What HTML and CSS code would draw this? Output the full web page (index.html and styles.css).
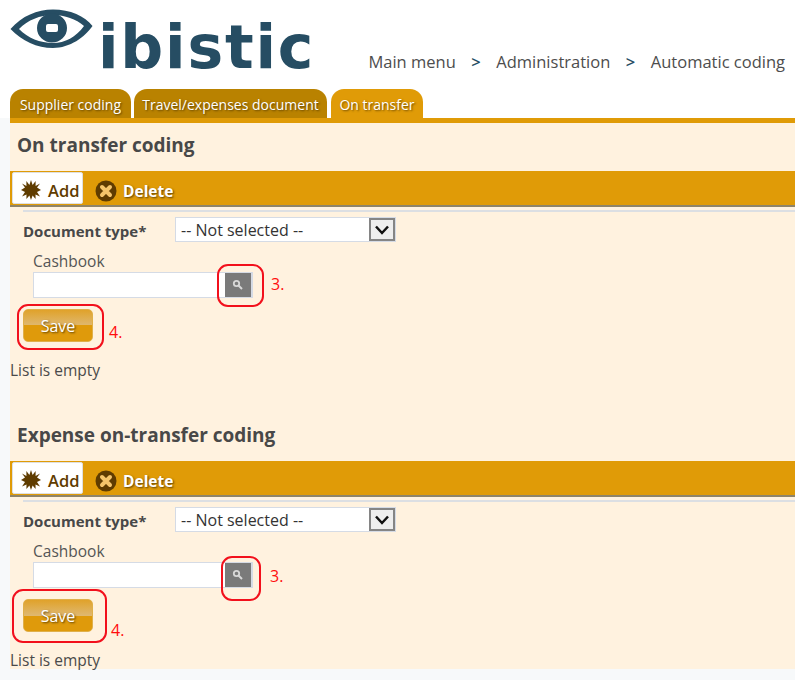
FILE: index.html
```
<!DOCTYPE html>
<html lang="en">
<head>
<meta charset="utf-8">
<title>Automatic coding</title>
<link rel="stylesheet" href="styles.css">
</head>
<body>
<header class="header">
  <div class="logo">
    <svg class="eye" width="87" height="40" viewBox="0 0 87 40">
      <path fill-rule="evenodd" fill="#264d63" d="M0.5 20C12 7 27 0.5 43 0.5C60 0.5 75 7 82.5 17C75 28 60 39 43 39C27 39 12 32 0.5 20ZM9 20C18 29 30 34 43 34C55 34 66 28 74 17C66 10 55 6 43 6C30 6 18 11 9 20Z"/>
      <path fill-rule="evenodd" fill="#264d63" d="M42 4.500A15 14.500 0 1 1 42 33.500A15 14.500 0 1 1 42 4.500ZM38 15H46A2 2 0 0 1 48 17V21A2 2 0 0 1 46 23H38A2 2 0 0 1 36 21V17A2 2 0 0 1 38 15Z"/>
    </svg>
    <span class="logo-text">ibistic</span>
  </div>
  <nav class="crumbs">
    <span>Main menu</span><span class="sep">&gt;</span><span>Administration</span><span class="sep">&gt;</span><span>Automatic coding</span>
  </nav>
</header>
<div class="tabs">
  <span class="tab tab-one">Supplier coding</span>
  <span class="tab tab-two">Travel/expenses document</span>
  <span class="tab tab-active">On transfer</span>
</div>
<main class="panel">
  <section class="block">
    <h2 class="title">On transfer coding</h2>
    <div class="toolbar">
      <span class="tool-add">
        <svg class="burst" width="20" height="20" viewBox="0 0 20 20"><path fill="#5f3c00" d="M10 0L11.6 5 14.6 1 14.6 6 19 3.5 16 7.5 20 10 16 12 19 16.5 14.5 14.5 14.6 19 11.6 15.500 10 20 8.400 15.500 5.400 19 5.500 14.500 1 16.500 4 12 0 10 4 7.500 1 3.500 5.400 6 5.400 1 8.400 5Z"/></svg>
        Add
      </span>
      <span class="tool-delete">
        <svg width="22" height="22" viewBox="0 0 22 22"><circle cx="11" cy="11" r="10.500" fill="#5f3c00"/><path d="M7 7L15 15M15 7L7 15" stroke="#f5c56a" stroke-width="4" stroke-linecap="round"/></svg>
        Delete
      </span>
    </div>
    <div class="form">
      <div class="doc-row">
        <label class="doc-label">Document type*</label>
        <div class="select"><span>-- Not selected --</span><span class="select-btn"><svg width="16" height="10" viewBox="0 0 16 10"><path d="M2 1.500L8 8L14 1.500" fill="none" stroke="#111" stroke-width="2.500"/></svg></span></div>
      </div>
      <div class="cash">
        <div class="cash-label">Cashbook</div>
        <div class="cash-row">
          <span class="input"></span>
          <span class="search"><svg width="12" height="12" viewBox="0 0 12 12"><circle cx="4.500" cy="4.500" r="2.700" fill="none" stroke="#d8d8d8" stroke-width="1.800"/><path d="M6.500 6.500L10 10" stroke="#d8d8d8" stroke-width="2"/></svg></span>
          <span class="note note-3a">3.</span>
          <span class="ring ring-3a"></span>
        </div>
      </div>
      <div class="save-row">
        <span class="save">Save</span>
        <span class="note note-4a">4.</span>
        <span class="ring ring-4a"></span>
      </div>
    </div>
    <p class="empty">List is empty</p>
  </section>
  <section class="block block-two">
    <h2 class="title">Expense on-transfer coding</h2>
    <div class="toolbar">
      <span class="tool-add">
        <svg class="burst" width="20" height="20" viewBox="0 0 20 20"><path fill="#5f3c00" d="M10 0L11.6 5 14.6 1 14.6 6 19 3.5 16 7.5 20 10 16 12 19 16.5 14.5 14.5 14.6 19 11.6 15.500 10 20 8.400 15.500 5.400 19 5.500 14.500 1 16.500 4 12 0 10 4 7.500 1 3.500 5.400 6 5.400 1 8.400 5Z"/></svg>
        Add
      </span>
      <span class="tool-delete">
        <svg width="22" height="22" viewBox="0 0 22 22"><circle cx="11" cy="11" r="10.500" fill="#5f3c00"/><path d="M7 7L15 15M15 7L7 15" stroke="#f5c56a" stroke-width="4" stroke-linecap="round"/></svg>
        Delete
      </span>
    </div>
    <div class="form">
      <div class="doc-row">
        <label class="doc-label">Document type*</label>
        <div class="select"><span>-- Not selected --</span><span class="select-btn"><svg width="16" height="10" viewBox="0 0 16 10"><path d="M2 1.500L8 8L14 1.500" fill="none" stroke="#111" stroke-width="2.500"/></svg></span></div>
      </div>
      <div class="cash cash-two">
        <div class="cash-label">Cashbook</div>
        <div class="cash-row">
          <span class="input"></span>
          <span class="search"><svg width="12" height="12" viewBox="0 0 12 12"><circle cx="4.500" cy="4.500" r="2.700" fill="none" stroke="#d8d8d8" stroke-width="1.800"/><path d="M6.500 6.500L10 10" stroke="#d8d8d8" stroke-width="2"/></svg></span>
          <span class="note note-3b">3.</span>
          <span class="ring ring-3b"></span>
        </div>
      </div>
      <div class="save-row">
        <span class="save">Save</span>
        <span class="note note-4b">4.</span>
        <span class="ring ring-4b"></span>
      </div>
    </div>
    <p class="empty">List is empty</p>
  </section>
</main>
</body>
</html>
```
FILE: styles.css
```
* { box-sizing: border-box; }
html, body { margin: 0; }
body {
  width: 795px;
  height: 680px;
  overflow: hidden;
  background: #f7f9fa;
  font-family: "Open Sans", "Noto Sans", sans-serif;
  color: #4a4a4a;
  font-size: 15px;
}
.header {
  height: 89px;
  background: #fff;
  display: flex;
  justify-content: space-between;
  align-items: flex-start;
  padding: 0 10px;
}
.logo { position: relative; width: 302px; height: 89px; }
.eye { position: absolute; left: 0; top: 9px; }
.logo-text {
  position: absolute;
  left: 88px;
  top: 11px;
  font-family: "DejaVu Sans", sans-serif;
  font-weight: 700;
  font-size: 60px;
  line-height: 72px;
  color: #264d63;
  letter-spacing: 1.800px;
  white-space: nowrap;
}
.crumbs {
  display: flex;
  margin-top: 50px;
  font-size: 16.500px;
  line-height: 24px;
  white-space: nowrap;
  color: #4d4d4d;
}
.sep { color: #264d63; width: 40.500px; text-align: center; font-weight: 600; }
.tabs {
  display: flex;
  gap: 3px;
  height: 29px;
  padding-left: 10px;
  background: #fff;
  align-items: stretch;
}
.tab {
  border-radius: 13px 13px 0 0;
  color: #fff;
  font-size: 14px;
  line-height: 32px;
  text-align: center;
  background: #b98200;
  text-shadow: 1px 1px 2px rgba(60,40,0,.7);
  white-space: nowrap;
}
.tab-one { width: 121px; }
.tab-two { width: 193px; }
.tab-active { width: 92px; margin-left: 1px; background: #e09b07; }
.panel {
  margin-left: 10px;
  height: 551px;
  background: #fff2df;
  border-top: 5px solid #e09b07;
}
.block { height: 290px; }
.title {
  margin: 0;
  height: 48px;
  padding: 8px 0 0 7px;
  font-size: 19px;
  line-height: 28px;
  font-weight: 700;
  color: #484848;
}
.toolbar {
  height: 36px;
  background: #e09b07;
  border-bottom: 2px solid #8f8468;
  display: flex;
  align-items: flex-start;
  gap: 12px;
  padding: 1px 0 0 2px;
}
.tool-add {
  width: 71px;
  height: 32px;
  background: #fff;
  border: 1px solid #dfdfdf;
  border-radius: 2px;
  display: flex;
  align-items: center;
  gap: 7px;
  padding: 4px 0 0 8px;
  color: #5f3c00;
  font-weight: 600;
  font-size: 16.500px;
}
.tool-delete {
  display: flex;
  align-items: center;
  height: 32px;
  gap: 6px;
  padding-top: 5px;
  color: #fff;
  font-weight: 700;
  font-size: 15.500px;
  text-shadow: 1px 1px 2px rgba(60,40,0,.8);
}
.form { position: relative; }
.doc-row {
  margin-left: 13px;
  padding-top: 5px;
  border-top: 2px solid #dcdfe3;
  margin-top: 3px;
  display: flex;
  align-items: center;
  height: 34px;
}
.doc-label {
  width: 152px;
  font-weight: 700;
  font-size: 15px;
  color: #484848;
}
.select {
  width: 221px;
  height: 25px;
  background: #fff;
  border: 1px solid #d5dbe5;
  display: flex;
  justify-content: space-between;
  align-items: center;
  padding-left: 5px;
  font-size: 16px;
  color: #333;
  position: relative;
  top: -1px;
}
.select-btn {
  width: 26px;
  height: 23px;
  border: 2px solid #858585;
  background: #eee;
  display: flex;
  align-items: center;
  justify-content: center;
}
.cash { margin: 7px 0 0 23px; }
.cash-label { font-size: 15.500px; line-height: 21px; color: #555; }
.cash-row { display: flex; position: relative; width: 220px; }
.input {
  width: 192px;
  height: 26px;
  background: #fff;
  border: 1px solid #d5dbe5;
  border-right: none;
  display: block;
}
.search {
  width: 28px;
  height: 26px;
  background: #7a7a7a;
  border: 1px solid #d5dbe5;
  border-width: 1px 2px 1px 0;
  display: flex;
  align-items: center;
  justify-content: center;
}
.save-row { position: relative; margin: 11px 0 0 13px; height: 34px; }
.save {
  display: block;
  width: 70px;
  height: 33px;
  border: 1px solid #e0b04a;
  border-radius: 5px;
  background: linear-gradient(#e0a22a 0, #dfb870 50%, #df9a0b 50%, #df9a0b 100%);
  color: #fff;
  text-align: center;
  font-size: 16px;
  line-height: 33px;
  text-shadow: 1px 1px 2px rgba(60,40,0,.8);
}
.empty { margin: 16px 0 0; font-size: 15.500px; line-height: 22px; color: #4a4a4a; }
.note {
  position: absolute;
  color: #ff0d0d;
  font-size: 16px;
  line-height: 20px;
}
.ring {
  position: absolute;
  border: 2px solid #f2101c;
  border-radius: 11px;
}
.note-3a { left: 238px; top: 2px; }
.note-3b { left: 237px; top: 4px; }
.ring-3a { left: 184px; top: -8px; width: 47px; height: 43px; }
.ring-3b { left: 188px; top: -6px; width: 40px; height: 45px; }
.note-4a { left: 86px; top: 13px; }
.note-4b { left: 88px; top: 21px; }
.ring-4a { left: -6px; top: -5px; width: 87px; height: 46px; }
.ring-4b { left: -11px; top: -10px; width: 95px; height: 54px; }
```
